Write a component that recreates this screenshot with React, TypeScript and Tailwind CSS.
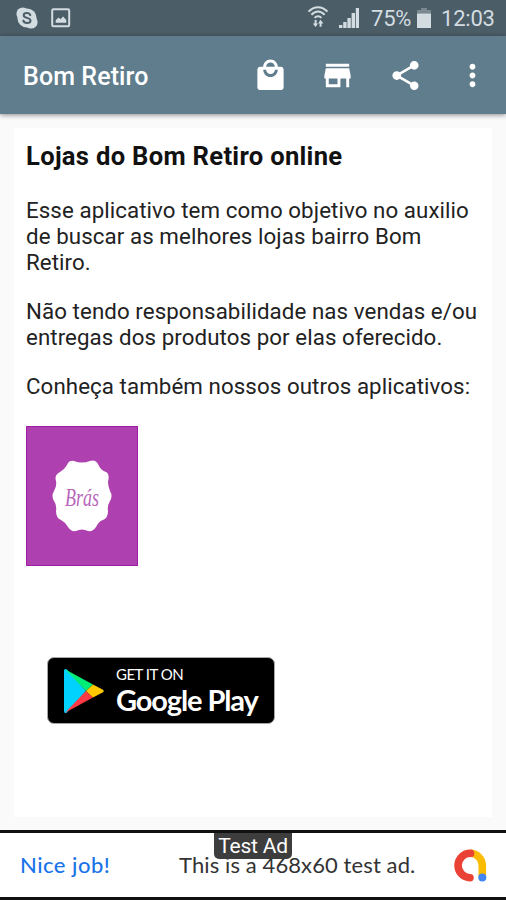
import type { ReactNode } from "react";

/* ========================================
   Bom Retiro — about screen
   Status bar, app bar, content card, ad banner.
   ======================================== */

interface ActionIconProps {
  label: string;
  path: string;
}

const ACTIONS: ActionIconProps[] = [
  {
    label: "Sacola",
    path: "M19 6h-2c0-2.76-2.24-5-5-5S7 3.24 7 6H5c-1.1 0-1.99.9-1.99 2L3 20c0 1.1.9 2 2 2h14c1.1 0 2-.9 2-2V8c0-1.1-.9-2-2-2zm-7-3c1.66 0 3 1.34 3 3H9c0-1.66 1.34-3 3-3zm0 10c-2.76 0-5-2.24-5-5h2c0 1.66 1.34 3 3 3s3-1.34 3-3h2c0 2.76-2.24 5-5 5z",
  },
  {
    label: "Lojas",
    path: "M20 4H4v2h16V4zm1 10v-2l-1-5H4l-1 5v2h1v6h10v-6h4v6h2v-6h1v0zm-9 4H6v-4h6v4z",
  },
  {
    label: "Compartilhar",
    path: "M18 16.08c-.76 0-1.44.3-1.96.77L8.91 12.7c.05-.23.09-.46.09-.7s-.04-.47-.09-.7l7.05-4.11c.54.5 1.25.81 2.04.81 1.66 0 3-1.34 3-3s-1.34-3-3-3-3 1.34-3 3c0 .24.04.47.09.7L8.04 9.81C7.5 9.31 6.79 9 6 9c-1.66 0-3 1.34-3 3s1.34 3 3 3c.79 0 1.5-.31 2.04-.81l7.12 4.16c-.05.21-.08.43-.08.65 0 1.61 1.31 2.92 2.92 2.92 1.61 0 2.92-1.31 2.92-2.92s-1.31-2.92-2.92-2.92z",
  },
  {
    label: "Mais",
    path: "M12 8c1.1 0 2-.9 2-2s-.9-2-2-2-2 .9-2 2 .9 2 2 2zm0 2c-1.1 0-2 .9-2 2s.9 2 2 2 2-.9 2-2-.9-2-2-2zm0 6c-1.1 0-2 .9-2 2s.9 2 2 2 2-.9 2-2-.9-2-2-2z",
  },
];

function ActionIcon({ label, path }: ActionIconProps) {
  return (
    <button type="button" aria-label={label} className="size-[35px]">
      <svg viewBox="0 0 24 24" className="size-full fill-white">
        <path d={path} />
      </svg>
    </button>
  );
}

function StatusBar() {
  return (
    <div className="flex h-9 items-center bg-[#4b5d67] pl-4 pr-[11px] text-[#d3dce1]">
      <svg viewBox="0 0 22 22" className="size-[22px]">
        <circle cx="11" cy="11" r="9.6" fill="currentColor" />
        <circle cx="6.8" cy="6.8" r="6.4" fill="currentColor" />
        <circle cx="15.2" cy="15.2" r="6.4" fill="currentColor" />
        <path
          d="M14.3 8.1C13.8 6.5 12.6 5.9 11 5.9c-2 0-3.3.9-3.3 2.3 0 3.5 6.8 1.8 6.8 5.3 0 1.6-1.5 2.6-3.5 2.6-2 0-3.3-.8-3.7-2.5"
          fill="none"
          stroke="#4b5d67"
          strokeWidth="2"
          strokeLinecap="round"
        />
      </svg>
      <svg viewBox="0 0 20 20" className="ml-[13px] h-5 w-5">
        <rect x="1.2" y="1.3" width="17" height="17" rx="1.2" fill="none" stroke="currentColor" strokeWidth="2" />
        <path d="M4.7 14.7v-2.5l2.8-2.7 2 1.7 2.6-2.7 3.2 3.4v2.8z" fill="currentColor" />
      </svg>
      <div className="grow" />
      <svg viewBox="0 0 22 22" className="mb-[2px] h-[22px] w-[22px]" fill="none" stroke="currentColor" strokeWidth="2">
        <path d="M1.5 5.7C7-.4 15-.4 20.5 5.7M4.4 8.8C8.5 4.5 13.5 4.5 17.6 8.8M7.6 11.9c2-2.1 4.8-2.1 6.8 0" />
        <path d="M8.6 14v5.2M13.6 20.8v-5.2" />
        <path d="M5.8 17.4l2.8 3.6 2.4-3.6zM11.1 17.4l2.5-3.6 2.8 3.6z" fill="currentColor" stroke="none" />
      </svg>
      <svg viewBox="0 0 20 20" className="ml-[10px] h-5 w-5" fill="currentColor">
        <path d="M0 17h3.4v3H0zM4.2 14h3.4v6H4.2zM8.4 10h3.4v10H8.4zM12.6 5H16v15h-3.4zM16.8 0H20v20h-3.2z" />
      </svg>
      <span className="ml-[12px] w-[42px] whitespace-nowrap pt-[2px] text-[22px] leading-none tracking-[-0.2px]">75%</span>
      <svg viewBox="0 0 14 20" className="ml-[4px] h-5 w-[14px]" fill="currentColor">
        <path d="M4 0h6v2h4v4H0V2h4z" opacity=".35" />
        <path d="M0 5.6h14V20H0z" />
      </svg>
      <span className="ml-[10px] w-[54px] whitespace-nowrap pt-[2px] text-[22px] leading-none tracking-[-0.2px]">12:03</span>
    </div>
  );
}

function AppBar() {
  return (
    <header className="relative flex h-[78px] items-center bg-[#607d8d] pl-[23px] pr-[16px] shadow-[0_1px_5px_rgba(0,0,0,0.45)]">
      <h1 className="grow pt-[2px] text-[25px] font-medium leading-none tracking-[0.1px] text-white">Bom Retiro</h1>
      <div className="flex gap-[32.5px]">
        {ACTIONS.map((action) => (
          <ActionIcon key={action.label} {...action} />
        ))}
      </div>
    </header>
  );
}

function Paragraph({ children }: { children: ReactNode }) {
  return <p className="mb-[23px] whitespace-nowrap text-[22.3px] leading-[26px] tracking-[0.08px] text-[#222]">{children}</p>;
}

function BrasTile() {
  return (
    <svg viewBox="0 0 112 140" className="mt-[27px] block h-[140px] w-[112px]">
      <rect width="112" height="140" fill="#ae40af" />
      <rect x=".5" y=".5" width="111" height="139" fill="none" stroke="#a020a5" />
      <path
        d="M48 35Q56 38 64 35Q70 33 73 40Q75 44 80 46Q84 48 82 56Q82 60 84 65Q87 70 84 75Q81 80 82 85Q82 92 77 94Q73 95 70 101Q67 106 62 105Q56 102 50 105Q45 106 42 101Q39 96 35 94Q30 92 30 85Q31 79 28 75Q25 70 28 65Q31 60 30 55Q28 49 34 46Q38 44 41 39Q43 34 48 35Z"
        fill="#fff"
      />
      <text
        x="39"
        y="80"
        fontFamily="'Liberation Serif', serif"
        fontStyle="italic"
        fontSize="26"
        textLength="34"
        lengthAdjust="spacingAndGlyphs"
        fill="#b966bb"
      >
        Brás
      </text>
    </svg>
  );
}

function GooglePlayBadge() {
  return (
    <div className="ml-[21px] flex h-[67px] w-[228px] items-center rounded-[7px] border border-[#a6a6a6] bg-black pl-[15px]">
      <svg viewBox="0 0 42 46" className="h-[46px] w-[42px]">
        <path d="M1 3Q1 0 4 1.5L23 23 4 44.5Q1 46 1 43z" fill="#00d2ff" />
        <path d="M2 1.2L30 16.5 23 23z" fill="#00ee76" />
        <path d="M2 44.8L30 29.5 23 23z" fill="#ff3a44" />
        <path d="M30 16.5L39.5 21.5Q42 23 39.5 24.5L30 29.5 23 23z" fill="#ffc800" />
      </svg>
      <div className="ml-[11px] whitespace-nowrap font-['Lato',sans-serif] text-white">
        <div className="pt-[2px] text-[15px] leading-[15px] tracking-[-0.5px]">GET IT ON</div>
        <div className="text-[29px] font-bold leading-[35px] tracking-[-1.1px]">Google Play</div>
      </div>
    </div>
  );
}

function AdBanner() {
  return (
    <footer className="relative flex h-[70px] items-center border-b-[3px] border-t-[3px] border-[#111] bg-white pl-5 pr-[19px] font-['Lato',sans-serif]">
      <span className="w-[159px] whitespace-nowrap text-[22px] font-medium leading-none tracking-[0.5px] text-[#1a73e8]">Nice job!</span>
      <span className="grow whitespace-nowrap text-[22px] leading-none tracking-[0.1px] text-[#333]">This is a 468x60 test ad.</span>
      <svg viewBox="0 0 33 33" className="h-[33px] w-[33px]" fill="none" strokeWidth="7.6" strokeLinecap="round">
        <path d="M16 4.3A12.2 12.2 0 0 1 28.3 16.5V28" stroke="#fbbc04" strokeLinecap="butt" />
        <path d="M16.5 4.3A12.2 12.2 0 1 0 16 28.7" stroke="#ea4335" />
        <circle cx="28.3" cy="28.6" r="4" fill="#4285f4" />
      </svg>
      <span className="absolute left-[214px] top-0 h-[26px] w-[78px] whitespace-nowrap rounded-b-[5px] bg-[#3d3d3d] text-center font-['Roboto',sans-serif] text-[21px] leading-[26px] tracking-[-0.2px] text-white">
        Test Ad
      </span>
    </footer>
  );
}

export default function App() {
  return (
    <div className="flex h-[900px] w-[506px] flex-col overflow-hidden bg-[#fafafa] font-['Roboto',sans-serif]">
      <StatusBar />
      <AppBar />
      <main className="mx-[14px] mb-[13px] mt-[14px] grow bg-white pl-3 pt-[12px]">
        <h2 className="mb-[25px] whitespace-nowrap text-[25.6px] font-bold leading-[32px] tracking-[0.3px] text-[#111]">
          Lojas do Bom Retiro online
        </h2>
        <Paragraph>
          Esse aplicativo tem como objetivo no auxilio
          <br />
          de buscar as melhores lojas bairro Bom
          <br />
          Retiro.
        </Paragraph>
        <Paragraph>
          Não tendo responsabilidade nas vendas e/ou
          <br />
          entregas dos produtos por elas oferecido.
        </Paragraph>
        <Paragraph>Conheça também nossos outros aplicativos:</Paragraph>
        <BrasTile />
        <div className="mt-[91px]">
          <GooglePlayBadge />
        </div>
      </main>
      <AdBanner />
    </div>
  );
}
